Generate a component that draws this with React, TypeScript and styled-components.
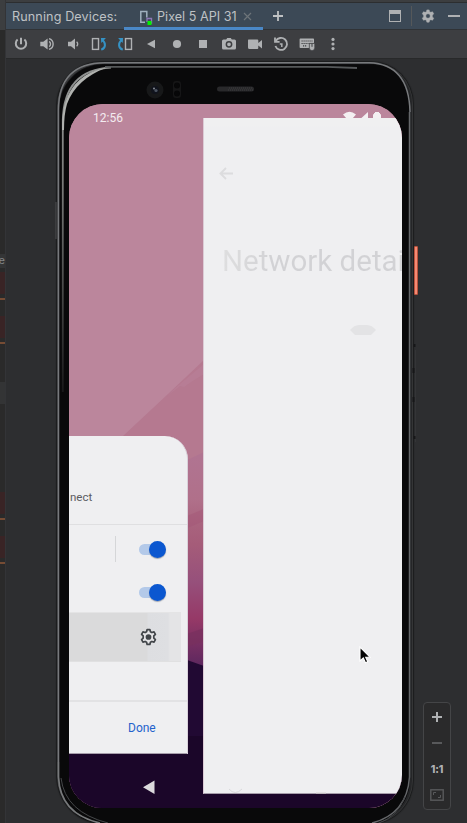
import React from "react";
import styled, { createGlobalStyle, css } from "styled-components";

const Global = createGlobalStyle`
  * { box-sizing: border-box; }
  html, body { margin: 0; padding: 0; background: #2d2e30; }
  svg { display: block; flex: none; }
`;

const Window = styled.div`
  width: 467px;
  height: 823px;
  display: grid;
  grid-template-columns: 6px 1fr;
  overflow: hidden;
  background: #2d2e30;
  font-family: Inter, "Liberation Sans", sans-serif;
`;

/* Sliver of the code editor to the left of the tool window */
const EditorEdge = styled.div`
  display: flex;
  flex-direction: column;
  overflow: hidden;
  background: #2a2a2a;
  border-right: 1px solid #333437;
`;
const EdgeBlock = styled.div<{ $h: number; $c?: string; $line?: boolean }>`
  flex: none;
  height: ${(p) => p.$h}px;
  background: ${(p) => p.$c ?? "transparent"};
  ${(p) => p.$line && css`border-bottom: 2px solid #764c34;`}
`;
const EdgeText = styled.div`
  flex: none;
  height: 14px;
  display: flex;
  justify-content: flex-end;
  align-items: center;
  background: #343536;
  color: #85878a;
  font: 11px/14px "Liberation Mono", monospace;
`;

const Panel = styled.div`
  min-width: 0;
  display: flex;
  flex-direction: column;
`;
const TopRule = styled.div`
  flex: none;
  height: 3px;
  background: #3c3e40;
  border-bottom: 1px solid #2c2e30;
`;
const TabBar = styled.div`
  flex: none;
  height: 27px;
  display: flex;
  background: #3c4956;
  border-bottom: 1px solid #303336;
  color: #bfc2c5;
  font-size: 12.6px;
  line-height: 27px;
`;
const TabTitle = styled.div`
  width: 118px;
  padding-left: 6px;
  white-space: nowrap;
  letter-spacing: 0.12px;
`;
const Tab = styled.div`
  width: 139px;
  height: 27px;
  display: flex;
  align-items: center;
  padding: 3px 9px 0 15px;
  border-bottom: 3px solid #4a88c7;
  white-space: nowrap;
`;
const TabName = styled.span`
  width: 86px;
  margin-left: 4px;
  letter-spacing: 0.02px;
`;
const TabActions = styled.div`
  flex: 1;
  display: flex;
  align-items: center;
  padding: 0 6px 0 9px;
`;
const Spacer = styled.div`
  flex: 1;
`;
const Separator = styled.div`
  width: 1px;
  height: 20px;
  margin: 0 9px 0 10px;
  background: #55585a;
`;
const Toolbar = styled.div`
  flex: none;
  height: 28px;
  display: grid;
  grid-template-columns: repeat(13, 26px);
  justify-items: center;
  align-items: center;
  padding-left: 2px;
  background: #3d3e41;
`;

const Stage = styled.div`
  position: relative;
  flex: 1;
  min-height: 0;
  padding: 3px 0 0 51px;
  background: #2d2e30;
  border-top: 1px solid #28292a;
`;

/* Device shell: rim, dark gap, inner rim, black bezel */
const Shell = styled.div`
  position: relative;
  width: 356px;
  height: 762px;
  padding: 42px 11px 0 12px;
  border-radius: 44px 42px 44px 48px;
  background: #09090a;
  box-shadow: inset -1px 0 0 #343536, inset 2px 2px 1px #393a3c,
    inset -3px 0 0 #252628, 0 0 1px 1px #1b1c1d;
`;
const Gloss = styled.svg`
  position: absolute;
  left: 0;
  top: 0;
  overflow: visible;
  pointer-events: none;
`;
const PowerButton = styled.div`
  position: absolute;
  left: 357px;
  top: 184px;
  width: 4px;
  height: 49px;
  border: 1px solid #b9513c;
  border-radius: 1px;
  background: #f48a73;
`;
const Screen = styled.div`
  position: relative;
  width: 333px;
  height: 704px;
  overflow: hidden;
  border-radius: 34px 34px 33px 33px;
  background: #bb869c;
  font-family: Roboto, sans-serif;
`;
const Wallpaper = styled.svg`
  position: absolute;
  inset: 0;
`;
const StatusBar = styled.div`
  position: relative;
  height: 28px;
  display: flex;
  justify-content: space-between;
  align-items: center;
  padding: 0 21px 0 24px;
  color: #f4ecf0;
  font-size: 12px;
`;

const Sheet = styled.div`
  position: absolute;
  left: 0;
  top: 332px;
  width: 119px;
  height: 318px;
  display: flex;
  flex-direction: column;
  border-right: 1px solid #d9d1da;
  border-top-right-radius: 23px;
  background: #efeff1;
`;
const SheetHeading = styled.div`
  height: 89px;
  padding: 54px 0 0 1px;
  border-bottom: 1px solid #dfdfe1;
  color: #5b5c61;
  font-size: 11.5px;
  line-height: 14px;
`;
const SheetRow = styled.div<{ $h: number; $split?: boolean }>`
  height: ${(p) => p.$h}px;
  display: flex;
  align-items: center;
  justify-content: space-between;
  padding: 0 21px 0 46px;
`;
const Divider = styled.div<{ $show?: boolean }>`
  width: 1px;
  height: 26px;
  background: ${(p) => (p.$show ? "#d5d6d8" : "transparent")};
`;
const Track = styled.div`
  position: relative;
  width: 27px;
  height: 11px;
  display: flex;
  align-items: center;
  justify-content: flex-end;
  background: linear-gradient(90deg, #b3c9e9 20px, transparent 20px);
  border-radius: 6px 0 0 6px;
`;
const Thumb = styled.div`
  flex: none;
  width: 17px;
  height: 17px;
  border-radius: 50%;
  background: #0b57d0;
  box-shadow: 0 1px 1px #9da4b1;
`;
const SelectedRow = styled.div`
  width: 112px;
  height: 50px;
  display: flex;
  align-items: center;
  padding: 0 0 0 71px;
  border-top: 1px solid #e4e4e5;
  border-bottom: 1px solid #e0e0e1;
  background: linear-gradient(90deg, #dadadb 78px, #dddee1 79px, #dedfe2 99px, #e4e4e6 101px);
`;
const SheetGap = styled.div`
  height: 40px;
  border-bottom: 2px solid #e2e2e4;
`;
const SheetAction = styled.div`
  flex: 1;
  display: flex;
  align-items: center;
  padding: 1px 0 0 59px;
  border-bottom: 1px solid #a69daa;
  color: #2462cc;
  font-size: 12px;
`;

const DetailPage = styled.div`
  position: absolute;
  left: 134px;
  top: 14px;
  width: 199px;
  height: 676px;
  padding: 48px 0 0 15px;
  overflow: hidden;
  border-left: 1px solid #dccbd5;
  border-bottom: 1px solid #a69daa;
  background: linear-gradient(#f0f0f1 8px, #efeff1 9px);
`;
const DetailTitle = styled.div`
  margin: 63px 0 0 3px;
  white-space: nowrap;
  font-size: 29.5px;
  line-height: 34px;
  color: transparent;
  background: linear-gradient(90deg, #dededf, #d2d2d5 50px);
  background-clip: text;
  -webkit-background-clip: text;
`;
const Smudge = styled.svg`
  margin: 46px 0 0 130px;
`;
const NavBack = styled.svg`
  position: absolute;
  left: 73px;
  top: 676px;
`;
const NavGhost = styled.svg`
  position: absolute;
  left: 160px;
  top: 684px;
`;

const ZoomPanel = styled.div`
  position: absolute;
  left: 417px;
  top: 643px;
  width: 28px;
  height: 108px;
  display: grid;
  grid-template-rows: repeat(4, 26px);
  place-items: center;
  padding-top: 1px;
  border: 1px solid #444547;
  border-radius: 4px;
  background: #2a2a2b;
`;
const Ratio = styled.div`
  color: #afb1b3;
  font-size: 10.5px;
  font-weight: 800;
  letter-spacing: -0.2px;
`;
const Cursor = styled.svg`
  position: absolute;
  left: 351px;
  top: 586px;
`;

const G = "#afb1b3";
const B = "#3592c4";

const toolIcons: React.ReactNode[] = [
  <g fill="none" stroke={G} strokeWidth="2"><path d="M8 1.8v6.4" /><path d="M4.6 3.6a5.2 5.2 0 1 0 6.8 0" /></g>,
  <g><path d="M1.3 5.8h3L8.6 2.4v11.2L4.3 10.2h-3z" fill={G} /><path d="M10.2 5.4a3.2 3.2 0 0 1 0 5.2M10 2.6a5.6 5.6 0 0 1 0 10.8" fill="none" stroke={G} strokeWidth="1.4" /></g>,
  <g><path d="M3 5.8h3L10 2.6v10.8L6 10.2H3z" fill={G} /><path d="M11.6 5.7a3 3 0 0 1 0 4.6" fill="none" stroke={G} strokeWidth="1.4" /></g>,
  <g fill="none"><rect x="1.500" y="2.600" width="6" height="10.800" stroke={G} strokeWidth="1.4" /><path d="M10.200 13.600c4.800-1.200 4.800-7 1-9.600" stroke={B} strokeWidth="2" /><path d="M9.900 2h5l-4.600 5z" fill={B} /></g>,
  <g fill="none"><rect x="8.500" y="2.600" width="6" height="10.800" stroke={G} strokeWidth="1.4" /><path d="M5.800 13.600C1 12.400 1 6.600 4.800 4" stroke={B} strokeWidth="2" /><path d="M6.100 2h-5l4.600 5z" fill={B} /></g>,
  <path d="M12 3.8v8.4L4 8z" fill={G} />,
  <circle cx="8" cy="8" r="4.1" fill={G} />,
  <rect x="4" y="4" width="8" height="8" fill={G} />,
  <path fillRule="evenodd" d="M2.500 3.500h2.700l1-1.500h3.600l1 1.500h2.700q1.500 0 1.500 1.500v7q0 1.500-1.500 1.500h-11Q1 13.500 1 12V5q0-1.500 1.500-1.500zM8 4.900a3.400 3.400 0 1 0 0 6.800 3.400 3.400 0 0 0 0-6.800zm0 1.500a1.900 1.900 0 1 1 0 3.800 1.900 1.900 0 0 1 0-3.800z" fill={G} />,
  <path d="M1.500 3.500h8.800q1 0 1 1V7L15 4v8.500L11.300 9.500V12q0 1-1 1H2.500q-1.500 0-1.500-1.500V4.500q0-1 .5-1z" fill={G} />,
  <g fill="none" stroke={G} strokeWidth="1.800"><path d="M2.800 5A6 6 0 1 1 2.400 10" /><path d="M2 1.500v4.300h4.600" /><path d="M6.800 8H9.600M8.800 8v3" strokeWidth="1.500" /></g>,
  <g><path d="M1.300 2.500h13q.7 0 .7.700V7h-5v5H1.300q-.7 0-.7-.7V3.200q0-.7.7-.7z" fill={G} /><path d="M2.500 5h11M2.500 7.500h7M4 9.800h4" stroke="#3d3e41" strokeWidth="1.200" strokeDasharray="1.200 .8" /><path d="M10.300 7.400h5.400v4.200a2.700 3 0 0 1-5.400 0z" fill={G} stroke="#3d3e41" strokeWidth=".6" /><path d="M13 7.600v3.200" stroke="#3d3e41" /></g>,
  <g fill={G}><circle cx="8" cy="3.4" r="1.6" /><circle cx="8" cy="8" r="1.6" /><circle cx="8" cy="12.600" r="1.6" /></g>,
];

const gearTeeth =
  "M6.700 1h2.600l.5 2 1.400.8 2-.6 1.300 2.300-1.500 1.500v2l1.500 1.500-1.300 2.300-2-.6-1.400.8-.5 2H6.700l-.5-2-1.400-.8-2 .6-1.300-2.300L3 9V7L1.500 5.500l1.300-2.300 2 .6L6.200 3z";

function TabHeader() {
  return (
    <TabBar>
      <TabTitle>Running Devices:</TabTitle>
      <Tab>
        <svg width="14" height="16" viewBox="0 0 14 16">
          <path d="M6 13.200H1.800V2.500h6v6" fill="none" stroke="#9fb0be" strokeWidth="1.500" />
          <path d="M8 13V9.500h4.500V14H10" fill="none" stroke="#8e77b8" strokeWidth="1.300" />
          <rect x="8.500" y="12" width="4" height="4" fill="#00f000" />
        </svg>
        <TabName>Pixel 5 API 31</TabName>
        <svg width="9" height="9" viewBox="0 0 9 9"><path d="M1 1l7 7M8 1L1 8" stroke="#6d7479" strokeWidth="1.200" /></svg>
      </Tab>
      <TabActions>
        <svg width="12" height="12" viewBox="0 0 12 12"><path d="M6 1v10M1 6h10" stroke="#bfc1c3" strokeWidth="1.800" /></svg>
        <Spacer />
        <svg width="12" height="12" viewBox="0 0 12 12"><rect x=".5" y=".5" width="11" height="11" fill="none" stroke={G} /><rect width="12" height="4" fill={G} /></svg>
        <Separator />
        <svg width="14" height="14" viewBox="0 0 16 16"><path fillRule="evenodd" d={gearTeeth + "M8 5.400a2.600 2.600 0 1 0 0 5.200 2.600 2.600 0 0 0 0-5.200z"} fill={G} stroke={G} strokeWidth=".6" /></svg>
        <svg width="26" height="12" viewBox="0 0 26 12"><rect x="13" y="5" width="12" height="2" fill={G} /></svg>
      </TabActions>
    </TabBar>
  );
}

function PhoneGloss() {
  return (
    <Gloss width="362" height="762" viewBox="0 0 362 762" fill="none">
      <defs>
        <linearGradient id="left" x1="0" y1="45" x2="0" y2="340" gradientUnits="userSpaceOnUse">
          <stop offset="0" stopColor="#8e908f" /><stop offset=".3" stopColor="#747674" /><stop offset="1" stopColor="#141415" />
        </linearGradient>
      </defs>
      <path d="M1.500 700V48Q1.500 1 48 .8H312Q352 2 353 50" stroke="#77797c" strokeWidth="1.500" />
      <path d="M5.800 330V58Q7 8 54 5.500" stroke="url(#left)" strokeWidth="1.800" />
      <path d="M5 68Q4 14 50 5.500Q19 17 10 42Q7 52 7 68z" fill="#b0b2af" />
      <path d="M48 4.800H270L300 6" stroke="#55585a" strokeWidth="1.800" />
      <path d="M352.500 50V715Q350 752 315 761" stroke="#65676a" strokeWidth="1.500" />
      <path d="M1.500 700V715Q3 752 43 761" stroke="#77797b" strokeWidth="1.700" />
      <path d="M4 716Q8 750 51 761M348 735Q340 755 322 761" stroke="#454749" />
      <path d="M-1 140V177" stroke="#4e5052" />
      <path d="M358.500 288V380" stroke="#343537" />
      <path d="M357.500 282v3M356.500 306v5M356.500 335v5M357.500 374v3" stroke="#161718" strokeWidth="2" />
      <circle cx="98" cy="28" r="8.500" fill="#171819" />
      <circle cx="98" cy="28" r="4" fill="#10131c" />
      <circle cx="99" cy="28.500" r="1.600" fill="#4b5360" /><circle cx="97" cy="26.500" r=".9" fill="#9499a2" />
      <rect x="116" y="19" width="8" height="17" rx="3" fill="#161617" />
      <circle cx="120" cy="23.500" r="3" fill="#070708" /><circle cx="120" cy="31.500" r="3" fill="#070708" />
      <rect x="160" y="24.500" width="37" height="5" rx="2.500" fill="#29292b" />
      <path d="M172 26h23M171 28h25" stroke="#3e3e40" strokeDasharray="1 1" />
    </Gloss>
  );
}

function PhoneScreen() {
  return (
    <Screen>
      <Wallpaper width="333" height="704" viewBox="0 0 333 704">
        <defs>
          <linearGradient id="dusk" x1="0" y1="354" x2="0" y2="560" gradientUnits="userSpaceOnUse">
            <stop offset="0" stopColor="#b07491" /><stop offset=".2" stopColor="#b0708a" /><stop offset=".32" stopColor="#a9637e" />
            <stop offset=".42" stopColor="#a55c79" /><stop offset=".6" stopColor="#96507b" /><stop offset=".78" stopColor="#963967" /><stop offset="1" stopColor="#5f285f" />
          </linearGradient>
        </defs>
        <rect width="333" height="704" fill="#bb869c" />
        <path d="M54 332L99 290L135 256V450H54z" fill="#b57990" />
        <path d="M104 286l31-26v10l-13 8-7 5-4-1-14 11z" fill="#b98299" opacity=".5" />
        <path d="M118 356L135 348V570H118z" fill="url(#dusk)" />
        <path d="M118 412l17-7v12l-17 7z" fill="#a45778" opacity=".5" />
        <path d="M118 530l17-6v13l-17 6z" fill="#78305e" opacity=".7" />
        <path d="M0 535L118 556L135 562V704H0z" fill="#210933" />
        <path d="M0 632H333V704H0z" fill="#1b0629" />
      </Wallpaper>
      <StatusBar>
        <span>12:56</span>
        <svg width="40" height="14" viewBox="0 0 40 14" fill="#f4f0f2">
          <path d="M2 3.500Q8.500-2 15 3.500L8.500 11zM27 1v10H16zM33 3V2h1V1h4v1h1v1q1 0 1 1v8h-8V4q0-1 1-1z" />
        </svg>
      </StatusBar>
      <Sheet>
        <SheetHeading>nect</SheetHeading>
        <SheetRow $h={48}><Divider $show /><Track><Thumb /></Track></SheetRow>
        <SheetRow $h={39}><Divider /><Track><Thumb /></Track></SheetRow>
        <SelectedRow>
          <svg width="17" height="18" viewBox="0 0 16 16"><path d={gearTeeth} fill="#e4e4e6" stroke="#414549" strokeWidth="1.600" strokeLinejoin="round" /><circle cx="8" cy="8" r="2.700" fill="#414549" /></svg>
        </SelectedRow>
        <SheetGap />
        <SheetAction>Done</SheetAction>
      </Sheet>
      <DetailPage>
        <svg width="15" height="15" viewBox="0 0 15 15"><path d="M14 7.500H1.500M7 2L1.500 7.500 7 13" fill="none" stroke="#dcdcde" strokeWidth="1.900" /></svg>
        <DetailTitle>Network details</DetailTitle>
        <Smudge width="28" height="12" viewBox="0 0 28 12"><path d="M1 6Q5 1.200 10 1H18Q23 1.200 27 6L22 11H6z" fill="#e3e3e5" /></Smudge>
      </DetailPage>
      <NavBack width="13" height="15" viewBox="0 0 13 15"><path d="M12.500.5v13.500L1 7.300z" fill="#dcdadd" /></NavBack>
      <NavGhost width="100" height="6" viewBox="0 0 100 6"><path d="M0 1q6 7 13 0" fill="none" stroke="#d9d9db" /><path d="M87 5h10" stroke="#d8d5d2" /></NavGhost>
    </Screen>
  );
}

export default function App() {
  return (
    <Window>
      <Global />
      <EditorEdge>
        <EdgeBlock $h={30} $c="#3c3e40" />
        <EdgeBlock $h={224} />
        <EdgeText>e</EdgeText>
        <EdgeBlock $h={4} />
        <EdgeBlock $h={22} $c="#392425" />
        <EdgeBlock $h={6} $line />
        <EdgeBlock $h={16} />
        <EdgeBlock $h={22} $c="#392425" />
        <EdgeBlock $h={6} $line />
        <EdgeBlock $h={38} />
        <EdgeBlock $h={22} $c="#333435" />
        <EdgeBlock $h={88} />
        <EdgeBlock $h={22} $c="#392425" />
        <EdgeBlock $h={6} $line />
        <EdgeBlock $h={16} />
        <EdgeBlock $h={22} $c="#392425" />
        <EdgeBlock $h={6} $line />
      </EditorEdge>
      <Panel>
        <TopRule />
        <TabHeader />
        <Toolbar>
          {toolIcons.map((icon, i) => (
            <svg key={i} width="16" height="16" viewBox="0 0 16 16">{icon}</svg>
          ))}
        </Toolbar>
        <Stage>
          <Shell>
            <PhoneScreen />
            <PhoneGloss />
            <PowerButton />
          </Shell>
          <ZoomPanel>
            <svg width="10" height="10" viewBox="0 0 10 10"><path d="M5 0v10M0 5h10" stroke={G} strokeWidth="2" /></svg>
            <svg width="10" height="2" viewBox="0 0 10 2"><rect width="10" height="2" fill="#58595b" /></svg>
            <Ratio>1:1</Ratio>
            <svg width="14" height="12" viewBox="0 0 14 12" fill="none" stroke="#58595b"><rect x=".8" y=".8" width="12.400" height="10.400" strokeWidth="1.400" /><path d="M3.500 6V3.500H6M10.500 6v2.500H8" /></svg>
          </ZoomPanel>
          <Cursor width="16" height="20" viewBox="0 0 16 20"><path d="M3 2v14l3.300-3 2.200 4.800 2.300-1-2.100-4.600h4.300z" fill="#050505" stroke="#fff" strokeWidth="1.100" /></Cursor>
        </Stage>
      </Panel>
    </Window>
  );
}
